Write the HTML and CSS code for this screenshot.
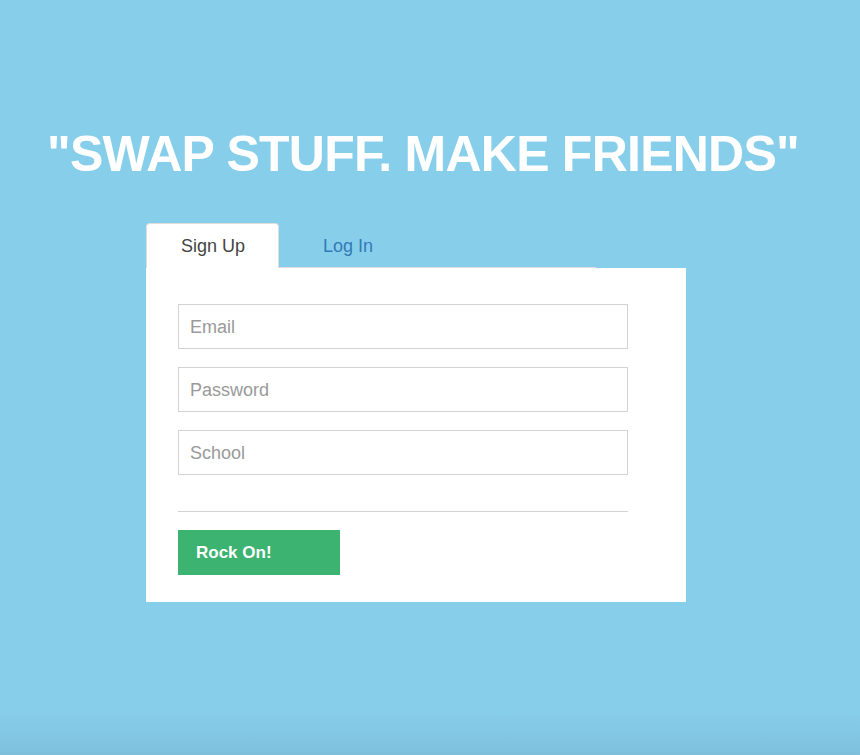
FILE: index.html
```html
<!DOCTYPE html>
<html>
<head>
<meta charset="utf-8">
<link rel="stylesheet" href="styles.css">
</head>
<body>
<div class="page">
  <h1 class="slogan">"SWAP STUFF. MAKE FRIENDS"</h1>
  <div class="card-wrap">
    <ul class="tabs">
      <li class="tab active">Sign Up</li>
      <li class="tab">Log In</li>
    </ul>
    <form class="panel">
      <input class="field" type="text" placeholder="Email">
      <input class="field" type="password" placeholder="Password">
      <input class="field" type="text" placeholder="School">
      <hr class="divider">
      <button class="btn" type="button">Rock On!</button>
    </form>
  </div>
</div>
</body>
</html>
```

FILE: styles.css
```css
html, body {
  margin: 0;
  padding: 0;
  height: 100%;
}
body {
  background: linear-gradient(to bottom, #87ceeb 0, #87ceeb 712px, #7ec0dc 755px);
  font-family: "Liberation Sans", Arial, sans-serif;
}
.page {
  padding-top: 129px;
}
.slogan {
  margin: 0;
  padding-left: 47px;
  font-size: 50px;
  line-height: 50px;
  letter-spacing: -0.75px;
  font-weight: bold;
  color: #fff;
}
.card-wrap {
  margin: 44px 0 0 146px;
  width: 540px;
}
.tabs {
  list-style: none;
  margin: 0;
  padding: 0;
  display: flex;
  gap: 9px;
  width: 450px;
  border-bottom: 1px solid #ddd;
  height: 44px;
}
.tab {
  line-height: 44px;
  padding: 0 34px;
  font-size: 18px;
  color: #337ab7;
  border: 1px solid transparent;
  border-bottom: none;
  border-radius: 4px 4px 0 0;
  box-sizing: border-box;
  height: 45px;
}
.tab.active {
  background: #fff;
  color: #444;
  border-color: #ddd;
  padding: 0 33px 0 34px;
}
.panel {
  background: #fff;
  padding: 36px 58px 27px 32px;
  display: flex;
  flex-direction: column;
  align-items: flex-start;
}
.field {
  width: 450px;
  height: 45px;
  box-sizing: border-box;
  border: 1px solid #d3d3d3;
  border-radius: 0;
  padding: 2px 11px 0;
  margin: 0 0 18px 0;
  font-family: "Liberation Sans", Arial, sans-serif;
  font-size: 18px;
  color: #333;
  outline: none;
}
.field::placeholder {
  color: #9a9a9a;
}
.field:nth-of-type(3) {
  margin-bottom: 36px;
}
.divider {
  width: 450px;
  margin: 0 0 18px 0;
  border: none;
  border-top: 1px solid #d3d3d3;
  height: 0;
}
.btn {
  width: 162px;
  height: 45px;
  background: #3cb371;
  border: none;
  border-radius: 0;
  color: #fff;
  font-family: "Liberation Sans", Arial, sans-serif;
  font-size: 17px;
  font-weight: bold;
  text-align: left;
  padding: 0 0 0 18px;
}
```
